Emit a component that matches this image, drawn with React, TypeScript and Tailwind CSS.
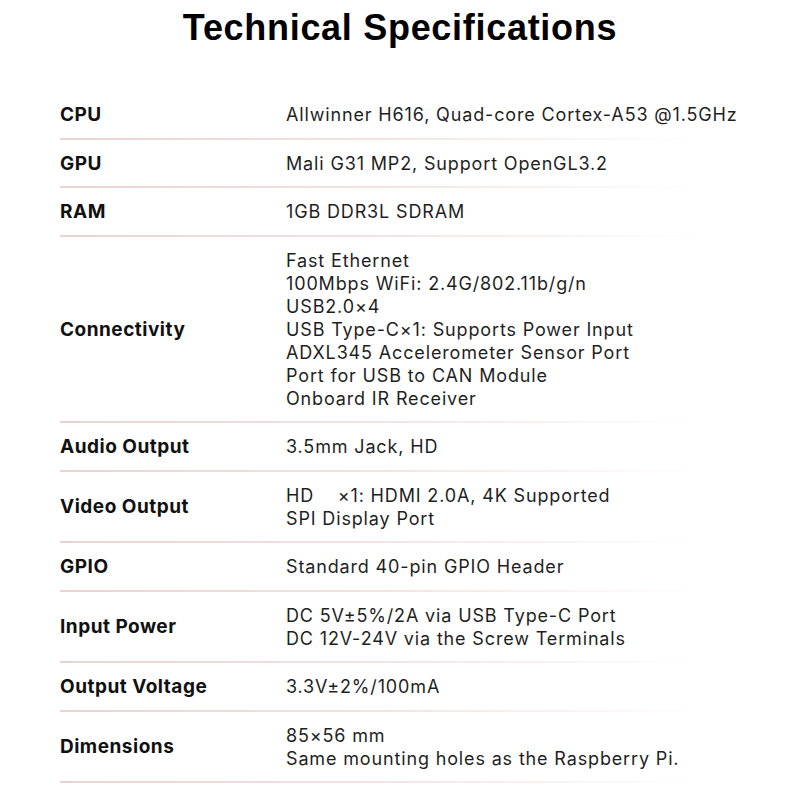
import React from "react";

type Spec = { label: string; values: string[] };

const specs: Spec[] = [
  { label: "CPU", values: ["Allwinner H616, Quad-core Cortex-A53 @1.5GHz"] },
  { label: "GPU", values: ["Mali G31 MP2, Support OpenGL3.2"] },
  { label: "RAM", values: ["1GB DDR3L SDRAM"] },
  {
    label: "Connectivity",
    values: [
      "Fast Ethernet",
      "100Mbps WiFi: 2.4G/802.11b/g/n",
      "USB2.0×4",
      "USB Type-C×1: Supports Power Input",
      "ADXL345 Accelerometer Sensor Port",
      "Port for USB to CAN Module",
      "Onboard IR Receiver",
    ],
  },
  { label: "Audio Output", values: ["3.5mm Jack, HD"] },
  { label: "Video Output", values: ["HD\u00a0\u00a0\u00a0\u00a0×1: HDMI 2.0A, 4K Supported", "SPI Display Port"] },
  { label: "GPIO", values: ["Standard 40-pin GPIO Header"] },
  { label: "Input Power", values: ["DC 5V±5%/2A via USB Type-C Port", "DC 12V-24V via the Screw Terminals"] },
  { label: "Output Voltage", values: ["3.3V±2%/100mA"] },
  { label: "Dimensions", values: ["85×56 mm", "Same mounting holes as the Raspberry Pi."] },
];

const SpecRow = ({ spec }: { spec: Spec }) => (
  <div>
    <div className="flex items-center pt-[12px] pb-[11.5px]">
      <div className="w-[226px] shrink-0 text-[19px] font-bold leading-[23px] tracking-[0.5px] text-[#111]">
        {spec.label}
      </div>
      <div className="flex flex-col text-[18px] leading-[23px] tracking-[0.85px] text-[#1f1f1f]">
        {spec.values.map((v) => (
          <span key={v}>{v}</span>
        ))}
      </div>
    </div>
    <div className="h-[2px] w-[640px] bg-gradient-to-r from-[#ecd2d2] via-[#f3e3e3] to-transparent" />
  </div>
);

export default function App() {
  return (
    <div className="w-[800px] h-[800px] bg-white overflow-hidden font-['Inter',sans-serif]">
      <h1 className="pt-[7px] text-center text-[36px] font-bold leading-[41px] tracking-[0.7px] text-black font-['Liberation_Sans',Arial,sans-serif]">
        Technical Specifications
      </h1>
      <div className="mt-[43px] px-[60px]">
        {specs.map((s) => (
          <SpecRow key={s.label} spec={s} />
        ))}
      </div>
    </div>
  );
}
